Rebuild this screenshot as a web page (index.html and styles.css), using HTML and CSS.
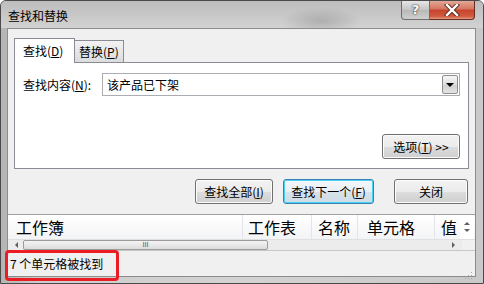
FILE: index.html
```html
<!DOCTYPE html>
<html lang="zh-CN">
<head>
    <meta charset="UTF-8">
    <title>查找和替换</title>
    <link rel="stylesheet" href="styles.css">
</head>
<body>

<div class="window">
    <!-- title bar -->
    <div class="titlebar">
        <span class="title">查找和替换</span>
        <div class="caption-btns">
            <div class="cap-help">?</div>
            <div class="cap-close">
                <svg width="16" height="12" viewBox="0 0 16 12">
                    <path d="M3 1 L13 11 M13 1 L3 11" stroke="#5a2a20" stroke-width="4.2" stroke-linecap="square"/>
                    <path d="M3 1 L13 11 M13 1 L3 11" stroke="#fff" stroke-width="2.4" stroke-linecap="square"/>
                </svg>
            </div>
        </div>
    </div>

    <div class="client">
        <!-- tabs -->
        <div class="tabs">
            <div class="tab active">查找(<u>D</u>)</div>
            <div class="tab">替换(<u>P</u>)</div>
        </div>
        <div class="panel">
            <div class="find-row">
                <label class="find-label">查找内容(<u>N</u>):</label>
                <div class="combo">
                    <span class="combo-text">该产品已下架</span>
                    <span class="combo-btn"><span class="arrow-down"></span></span>
                </div>
            </div>
            <div class="options-row">
                <button class="btn btn-options">选项(<u>T</u>) &gt;&gt;</button>
            </div>
        </div>

        <!-- action buttons -->
        <div class="actions">
            <button class="btn btn-findall">查找全部(<u>I</u>)</button>
            <button class="btn btn-next">查找下一个(<u>F</u>)</button>
            <button class="btn btn-close">关闭</button>
        </div>

        <!-- results list -->
        <div class="results">
            <div class="list-head">
                <div class="col col-book">工作簿</div>
                <div class="col col-sheet">工作表</div>
                <div class="col col-name">名称</div>
                <div class="col col-cell">单元格</div>
                <div class="col col-value">值</div>
                <div class="vscroll">
                    <span class="tri-up"></span>
                    <span class="tri-down"></span>
                </div>
            </div>
            <div class="hscroll">
                <span class="tri-left"></span>
                <div class="hthumb"><span class="grip">III</span></div>
                <div class="htrack"></div>
                <span class="tri-right"></span>
                <div class="hcorner"></div>
            </div>
        </div>

        <div class="statusbar">
            <span class="status-text">7 个单元格被找到</span>
            <span class="sizegrip">
                <svg width="9" height="9" viewBox="0 0 9 9">
                    <rect x="7" y="1" width="1" height="1" fill="#a8a8a8"/>
                    <rect x="4" y="4" width="1" height="1" fill="#a8a8a8"/>
                    <rect x="7" y="4" width="1" height="1" fill="#a8a8a8"/>
                    <rect x="1" y="7" width="1" height="1" fill="#a8a8a8"/>
                    <rect x="4" y="7" width="1" height="1" fill="#a8a8a8"/>
                    <rect x="7" y="7" width="1" height="1" fill="#a8a8a8"/>
                </svg>
            </span>
        </div>
    </div>

    <!-- red annotation box -->
    <div class="highlight"></div>
</div>

</body>
</html>
```

FILE: styles.css
```css
* {
    box-sizing: border-box;
}
body {
    margin: 0;
    font-family: "Noto Sans CJK SC", "Noto Sans", sans-serif;
    font-size: 12px;
    color: #000;
    background: #fff;
}
u {
    text-decoration: underline;
    text-underline-offset: 1px;
}
.window {
    position: relative;
    width: 484px;
    height: 284px;
    background: linear-gradient(90deg, #b4b4b4 0%, #cdcdcd 8%, #d3d3d3 50%, #c9c9c9 100%);
    border: 1px solid #4a4a4a;
    border-radius: 6px 6px 0 0;
    overflow: hidden;
}
.titlebar {
    height: 27px;
    display: flex;
    justify-content: space-between;
    align-items: flex-start;
    background: radial-gradient(ellipse 40px 14px at 320px 20px, rgba(120,120,120,0.35), rgba(0,0,0,0)),
                linear-gradient(#bdbdbd, #d2d2d2);
}
.title {
    margin: 6px 0 0 7px;
    font-size: 12px;
    color: #000;
}
.caption-btns {
    display: flex;
    margin-right: 8px;
}
.cap-help {
    width: 29px;
    height: 19px;
    border: 1px solid #6d6d6d;
    border-top: none;
    border-radius: 0 0 0 4px;
    background: linear-gradient(#e6e6e6, #c4c4c4 50%, #b8b8b8 51%, #cfcfcf);
    color: #fff;
    font-family: "DejaVu Sans", sans-serif;
    font-weight: bold;
    font-size: 13px;
    text-align: center;
    line-height: 17px;
    text-shadow: 0 0 2px #333, 0 0 1px #222;
}
.cap-close {
    width: 45px;
    height: 19px;
    border: 1px solid #6a2b20;
    border-top: none;
    border-left: none;
    border-radius: 0 0 4px 0;
    background: linear-gradient(#e4a896, #d47560 45%, #c5432b 50%, #d25a40 85%, #e29a84);
    display: flex;
    align-items: center;
    justify-content: center;
}

/* dialog client area */
.client {
    margin-left: 6px;
    width: 469px;
    height: 249px;
    background: #f0f0f0;
    border: 1px solid #8c8c8c;
    display: flex;
    flex-direction: column;
}
.tabs {
    display: flex;
    align-items: flex-end;
    padding: 9px 0 0 6px;
    height: 33px;
}
.tab {
    height: 22px;
    padding: 0 4px;
    border: 1px solid #898c95;
    border-bottom: none;
    background: linear-gradient(#f2f2f2, #dcdcdc);
    line-height: 21px;
    margin-left: -1px;
    white-space: nowrap;
}
.tab.active {
    height: 25px;
    width: 61px;
    padding: 0 8px;
    background: #fff;
    margin-left: 0;
    margin-bottom: -1px;
    position: relative;
    z-index: 1;
    line-height: 23px;
}
.panel {
    margin-left: 6px;
    width: 455px;
    height: 107px;
    border: 1px solid #898c95;
    background: #fff;
    display: flex;
    flex-direction: column;
    justify-content: space-between;
    padding: 10px 8px 9px 8px;
}
.find-row {
    display: flex;
    align-items: center;
}
.find-label {
    flex: none;
    width: 79px;
    white-space: nowrap;
}
.combo {
    flex: 1;
    height: 23px;
    border: 1px solid #abadb3;
    display: flex;
    align-items: center;
    justify-content: space-between;
    padding: 0 1px 0 4px;
}
.combo-text {
    font-size: 12px;
}
.combo-btn {
    width: 16px;
    height: 19px;
    border: 1px solid #8e8f8f;
    border-radius: 2px;
    background: linear-gradient(#f6f6f6, #dedede 50%, #cfcfcf 51%, #e4e4e4);
    display: flex;
    align-items: center;
    justify-content: center;
}
.arrow-down {
    width: 0;
    height: 0;
    border-left: 4px solid transparent;
    border-right: 4px solid transparent;
    border-top: 4px solid #000;
}
.options-row {
    display: flex;
    justify-content: flex-end;
}

/* buttons */
.btn {
    font-family: "Noto Sans CJK SC", "Noto Sans", sans-serif;
    font-size: 12px;
    height: 25px;
    padding: 0;
    border: 1px solid #707070;
    border-radius: 3px;
    background: linear-gradient(#f2f2f2, #ebebeb 50%, #dddddd 51%, #cfcfcf);
    box-shadow: inset 0 0 0 1px #fcfcfc;
    color: #000;
    cursor: pointer;
    white-space: nowrap;
}
.btn-options {
    width: 78px;
}
.actions {
    display: flex;
    justify-content: flex-end;
    margin-top: 10px;
    padding-right: 7px;
}
.btn-findall {
    width: 78px;
}
.btn-next {
    width: 91px;
    margin-left: 10px;
    border-color: #3c7fb1;
    box-shadow: inset 0 0 0 1px #48d2f6;
    background: linear-gradient(#f4f8fb, #e8eef3 50%, #d7e2ea 51%, #cfdce6);
}
.btn-close {
    width: 74px;
    margin-left: 20px;
}

/* results list */
.results {
    margin-top: 10px;
    width: 467px;
    height: 36px;
    border-top: 1px solid #a0a0a0;
    background: #fff;
    display: flex;
    flex-direction: column;
}
.list-head {
    height: 24px;
    display: flex;
    align-items: center;
    background: linear-gradient(#ffffff, #f3f4f6);
}
.col {
    height: 24px;
    line-height: 24px;
    font-size: 16px;
    padding-left: 5px;
    border-right: 1px solid #e3e5e8;
    white-space: nowrap;
    overflow: hidden;
}
.col-book {
    width: 235px;
    padding-left: 8px;
}
.col-sheet {
    width: 69px;
}
.col-name {
    width: 46px;
    padding-left: 6px;
}
.col-cell {
    width: 77px;
    padding-left: 9px;
}
.col-value {
    width: 25px;
    padding-left: 6px;
    border-right: none;
}
.vscroll {
    width: 14px;
    height: 24px;
    display: flex;
    flex-direction: column;
    align-items: center;
    justify-content: center;
    gap: 4px;
    background: #fff;
}
.tri-up, .tri-down, .tri-left, .tri-right {
    width: 0;
    height: 0;
    display: block;
}
.tri-up {
    border-left: 3px solid transparent;
    border-right: 3px solid transparent;
    border-bottom: 3px solid #606060;
}
.tri-down {
    border-left: 3px solid transparent;
    border-right: 3px solid transparent;
    border-top: 3px solid #606060;
}
.hscroll {
    height: 11px;
    display: flex;
    align-items: center;
    background: #ececec;
    border-top: 1px solid #e0e0e0;
}
.tri-left {
    margin: 0 5px 0 7px;
    border-top: 3px solid transparent;
    border-bottom: 3px solid transparent;
    border-right: 3px solid #606060;
}
.hthumb {
    width: 245px;
    height: 10px;
    border: 1px solid #9b9b9b;
    border-radius: 2px;
    background: linear-gradient(#f4f4f4, #dcdcdc);
    font-family: "DejaVu Sans", sans-serif;
    font-size: 7px;
    line-height: 8px;
    color: #555;
    text-align: center;
}
.htrack {
    flex: 1;
}
.tri-right {
    margin: 0 7px 0 5px;
    border-top: 3px solid transparent;
    border-bottom: 3px solid transparent;
    border-left: 3px solid #606060;
}
.hcorner {
    width: 13px;
    height: 10px;
    background: #f0f0f0;
}

/* status bar */
.statusbar {
    flex: 1;
    display: flex;
    align-items: flex-end;
    justify-content: space-between;
    padding: 0 2px 1px 0;
    border-top: 1px solid #c8c8c8;
}
.status-text {
    margin: 0 0 3px 2px;
    font-size: 12px;
}
.sizegrip {
    display: block;
    height: 9px;
}

/* annotation over the status text */
.highlight {
    position: absolute;
    left: 4px;
    top: 249px;
    width: 114px;
    height: 31px;
    border: 3px solid #ec1c24;
    border-radius: 4px;
}
```
